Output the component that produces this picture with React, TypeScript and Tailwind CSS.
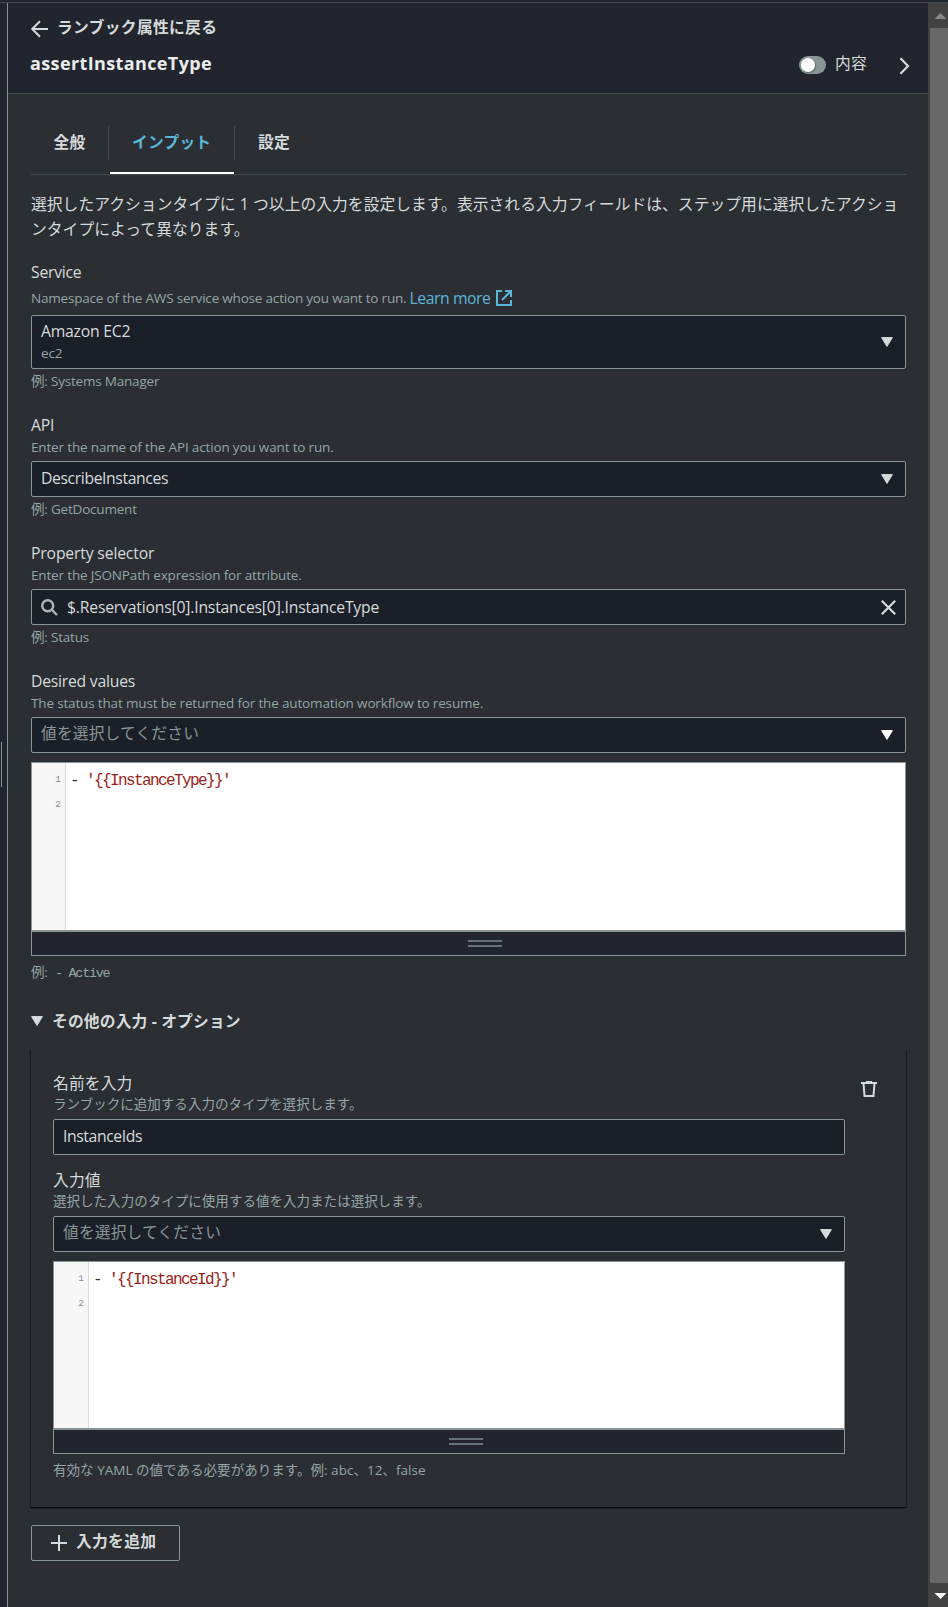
import type { ReactNode } from "react";

const Caret = ({ white = false }: { white?: boolean }) => (
  <svg width="12" height="10" viewBox="0 0 12 10" className={white ? "text-white" : "text-[#d5dbdb]"}>
    <path d="M0.6 0.6h10.8L6 9.4z" fill="currentColor" stroke="currentColor" strokeLinejoin="round" />
  </svg>
);

const Field = ({ label, desc, children }: { label: ReactNode; desc: ReactNode; children: ReactNode }) => (
  <div className="flex flex-col">
    <div className="h-[23.5px] leading-[25px] tracking-[-0.17px]">{label}</div>
    <div className="mb-[4.5px] h-5 text-[13.5px] leading-5 tracking-[-0.16px] text-[#95a5a6]">{desc}</div>
    {children}
  </div>
);

const Box = ({ children }: { children: ReactNode }) => (
  <div className="flex h-9 items-center justify-between rounded-[2px] border border-[#879596] bg-[#1b1f28] pr-3 pl-[9px]">
    {children}
  </div>
);

const Hint = ({ children }: { children: ReactNode }) => (
  <div className="h-6 text-[13.5px] leading-[25px] tracking-[-0.2px] text-[#95a5a6]">{children}</div>
);

const Editor = ({ code, first = false }: { code: string; first?: boolean }) => (
  <div className={`mt-[9px] flex flex-col border border-[#879596] ${first ? "h-[194px]" : "h-[193px]"}`}>
    <div className="flex grow bg-white font-['Liberation_Mono',monospace] leading-[24.75px]">
      <div
        className={`border-r border-[#dddddd] bg-[#f7f7f7] pt-[5px] pr-1 text-right text-[9.5px] text-[#8c8c8c] ${first ? "w-[34px]" : "w-[35px]"}`}
      >
        <div>1</div>
        <div>2</div>
      </div>
      <div className="pt-[6px] pl-1 text-[16px] tracking-[-1.6px] whitespace-pre text-[#333333]">
        - <span className="text-[#9a2318]">{code}</span>
      </div>
    </div>
    <div className={`flex h-[25px] flex-col items-center justify-center gap-[3px] border-t-2 border-[#879596] bg-[#22252d] ${first ? "pl-8" : "pl-[34px]"}`}>
      <div className="h-[2px] w-[34px] bg-[#687078]" />
      <div className="h-[2px] w-[34px] bg-[#687078]" />
    </div>
  </div>
);

export default function App() {
  return (
    <div
      lang="ja"
      className="flex h-[1607px] w-[948px] flex-col overflow-hidden bg-[#22252d] font-['Open_Sans','Noto_Sans_CJK_JP',sans-serif] text-[15.75px] text-[#d5dbdb]"
    >
      <div className="h-[3px] shrink-0 border-b border-[#44474f]" />
      <div className="flex grow">
        <div className="relative w-2 shrink-0 border-r border-[#8b8f94]">
          <div className="absolute top-[739px] left-0 h-[45px] w-[2px] border-r border-[#879596]" />
        </div>

        <main className="flex w-[920px] shrink-0 flex-col bg-[#2b2e33]">
          <header className="flex h-[91px] flex-col border-b border-[#44494e] bg-[#22252d] pr-[18px] pl-[22px]">
            <div className="mt-3 flex h-6 items-center gap-[9px] leading-6 font-bold">
              <svg width="18" height="18" viewBox="0 0 18 18" fill="none" stroke="currentColor" strokeWidth="2" className="mt-1">
                <path d="M10 1.2 2.2 9l7.800 7.800M2.200 9H18" />
              </svg>
              <span className="tracking-[0.32px]">ランブック属性に戻る</span>
            </div>
            <div className="mt-[10px] flex h-7 items-center">
              <h1 className="text-[18px] leading-7 font-bold tracking-[0.38px] text-[#eaeded]">assertInstanceType</h1>
              <div className="mt-[3px] ml-auto flex h-[18px] w-[27px] items-center rounded-full bg-[#879596] pl-[2px]">
                <div className="h-[14px] w-[14px] rounded-full bg-white shadow-[1px_1px_1px_rgba(0,0,0,0.3)]" />
              </div>
              <span className="-mt-px ml-[9px] leading-7 tracking-[0.2px]">内容</span>
              <svg width="11" height="18" viewBox="0 0 11 18" fill="none" stroke="currentColor" strokeWidth="2.200" className="mt-[6px] ml-8">
                <path d="M1.500 1.200 9 9l-7.500 7.800" />
              </svg>
            </div>
          </header>

          <div className="flex w-[898px] flex-col pl-[23px]">
            <nav className="flex h-[81px] border-b border-[#44494e] pt-8 font-bold tracking-[0.2px]">
              <div className="h-[34px] w-[78px] border-r border-[#44494e] pl-[22.5px] leading-[33px]">全般</div>
              <div className="h-[48px] w-[126px]">
                <div className="h-[34px] border-r border-[#44494e] pl-[23px] leading-[33px] text-[#5bb5d8]">インプット</div>
                <div className="mt-3 ml-px h-[2px] w-[124px] bg-white" />
              </div>
              <div className="h-[34px] pl-[23px] leading-[33px]">設定</div>
            </nav>

            <p className="mt-[17px] h-[50px] leading-[24.75px] tracking-[0.055px] whitespace-nowrap">
              選択したアクションタイプに 1 つ以上の入力を設定します。表示される入力フィールドは、ステップ用に選択したアクショ
              <br />
              ンタイプによって異なります。
            </p>

            <div className="mt-[18px] h-6 leading-[25px] tracking-[-0.24px]">Service</div>
            <div className="flex h-[31px] items-start text-[13.5px] leading-[28px] tracking-[-0.195px] text-[#95a5a6]">
              <span>Namespace of the AWS service whose action you want to run.</span>
              <a className="ml-[3px] text-[15.75px] tracking-[-0.43px] text-[#5bb5d8]">Learn more</a>
              <svg width="16" height="16" viewBox="0 0 16 16" fill="none" stroke="currentColor" strokeWidth="2" className="mt-[6px] ml-[5px] text-[#5bb5d8]">
                <path d="M6 1H1v14h14v-5M9 1h6v6M14.500 1.500 6 10" />
              </svg>
            </div>
            <div className="flex h-[54px] items-center rounded-[2px] border border-[#879596] bg-[#1b1f28] pr-3 pl-[9px]">
              <div className="grow">
                <div className="h-6 leading-[23px] tracking-[-0.23px]">Amazon EC2</div>
                <div className="h-5 text-[13.5px] leading-[18px] tracking-[-0.18px] text-[#95a5a6]">ec2</div>
              </div>
              <Caret />
            </div>
            <Hint>例: Systems Manager</Hint>

            <div className="mt-5">
              <Field label="API" desc="Enter the name of the API action you want to run.">
                <Box>
                  <span className="tracking-[-0.39px]">DescribeInstances</span>
                  <Caret />
                </Box>
              </Field>
              <Hint>例: GetDocument</Hint>
            </div>

            <div className="mt-5">
              <Field label="Property selector" desc="Enter the JSONPath expression for attribute.">
                <Box>
                  <svg width="17" height="17" viewBox="0 0 17 17" fill="none" stroke="#aab7b8" strokeWidth="2.400" className="mr-[9px]">
                    <circle cx="6.700" cy="6.700" r="5.500" />
                    <path d="m10.700 10.700 5.300 5.300" />
                  </svg>
                  <span className="mt-px grow tracking-[-0.2px]">$.Reservations[0].Instances[0].InstanceType</span>
                  <svg width="15" height="15" viewBox="0 0 15 15" fill="none" stroke="currentColor" strokeWidth="2.200" className="-mr-[3px]">
                    <path d="m0.800 0.800 13.400 13.400M14.200 0.800 0.800 14.200" />
                  </svg>
                </Box>
              </Field>
              <Hint>例: Status</Hint>
            </div>

            <div className="mt-5">
              <Field label={<span className="tracking-[-0.24px]">Desired values</span>} desc="The status that must be returned for the automation workflow to resume.">
                <Box>
                  <span className="-mt-[2px] tracking-[0.15px] text-[#879596]">値を選択してください</span>
                  <Caret white />
                </Box>
              </Field>
              <Editor first code="'{{InstanceType}}'" />
              <div className="mt-1">
                <Hint>
                  例: <span className="ml-1 font-['Liberation_Mono',monospace] tracking-[-1.300px]">- Active</span>
                </Hint>
              </div>
            </div>

            <div className="mt-[25px] flex h-6 items-center gap-[9px] leading-6 font-bold">
              <Caret />
              <span className="tracking-[0.16px]">その他の入力 - オプション</span>
            </div>

            <section className="mt-4 flex h-[458px] gap-4 px-[22px] pt-[22px] shadow-[0_1px_1px_0_rgba(0,0,0,0.6),1px_1px_1px_0_rgba(0,0,0,0.3),-1px_1px_1px_0_rgba(0,0,0,0.3)]">
              <div className="flex w-[792px] flex-col">
                <Field
                  label={<span className="tracking-[0.15px]">名前を入力</span>}
                  desc={<div className="leading-[18px] tracking-[0.03px]">ランブックに追加する入力のタイプを選択します。</div>}
                >
                  <Box>
                    <span className="-mt-px tracking-[-0.4px]">InstanceIds</span>
                  </Box>
                </Field>
                <div className="mt-[13px]">
                  <Field
                    label={<div className="leading-6 tracking-[0.15px]">入力値</div>}
                    desc={<div className="leading-[18px] tracking-[0.03px]">選択した入力のタイプに使用する値を入力または選択します。</div>}
                  >
                    <Box>
                      <span className="-mt-[3px] tracking-[0.15px] text-[#879596]">値を選択してください</span>
                      <Caret />
                    </Box>
                  </Field>
                </div>
                <Editor code="'{{InstanceId}}'" />
                <div className="mt-1">
                  <Hint>
                    <span className="tracking-[0.03px]">有効な YAML の値である必要があります。例: abc、12、false</span>
                  </Hint>
                </div>
              </div>
              <svg width="16" height="16" viewBox="0 0 16 16" fill="none" stroke="currentColor" strokeWidth="2" className="mt-[10px]">
                <path d="M0 2h16M5 1h6M2.500 2l1 13h9l1-13" />
              </svg>
            </section>

            <button className="mt-[18px] flex h-9 w-[149px] items-center rounded-[2px] border border-[#879596] pl-[19px] font-bold">
              <svg width="16" height="16" viewBox="0 0 16 16" fill="none" stroke="currentColor" strokeWidth="2">
                <path d="M8 0v16M0 8h16" />
              </svg>
              <span className="-mt-[3px] ml-[9px] tracking-[0.3px]">入力を追加</span>
            </button>
          </div>
        </main>

        <div className="flex w-5 shrink-0 flex-col bg-[#424242]">
          <svg width="20" height="25" viewBox="0 0 20 25">
            <path d="M6.500 16 12.500 10l6 6z" fill="#868686" />
          </svg>
          <div className="ml-[2px] h-[1555px] bg-[#686868]" />
          <svg width="20" height="24" viewBox="0 0 20 24">
            <path d="M6.500 10h12l-6 6z" fill="#fff" />
          </svg>
        </div>
      </div>
    </div>
  );
}
